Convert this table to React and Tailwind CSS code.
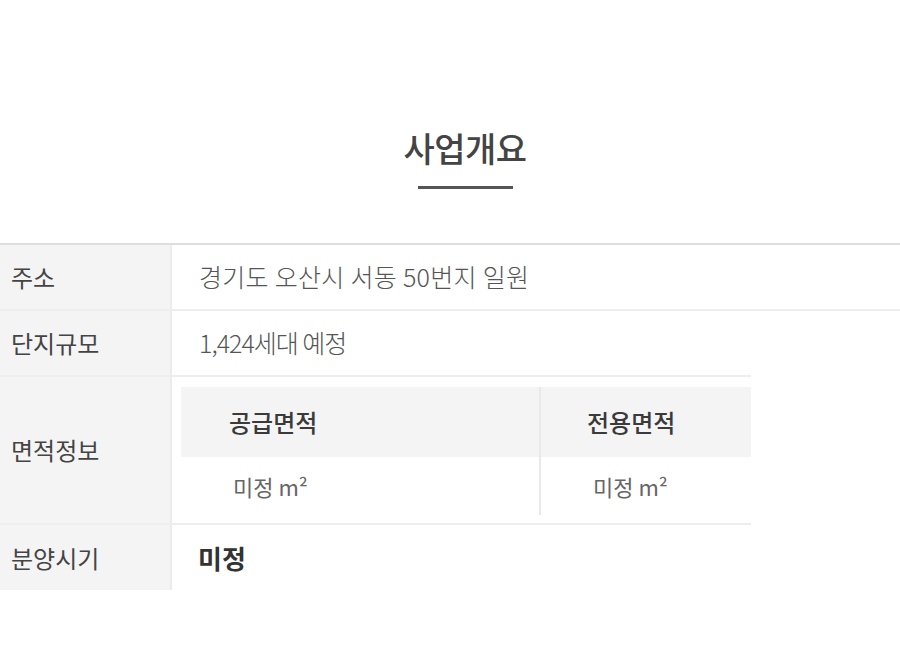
import React from "react";

const rows = [
  { label: "주소", value: "경기도 오산시 서동 50번지 일원" },
  { label: "단지규모", value: "1,424세대 예정" },
];

export default function App() {
  return (
    <div className="min-h-[670px] bg-white text-[#444]" style={{ fontFamily: '"Noto Sans CJK KR", "Noto Sans", sans-serif' }}>
      <div className="pt-[123px] pl-[30px] flex flex-col items-center">
        <h2 className="text-[34px] leading-[50px] font-medium text-[#444] tracking-[-0.5px]">사업개요</h2>
        <div className="mt-[13px] w-[95px] h-[3px] bg-[#555]" />
      </div>

      <div className="mt-[54px] border-t-2 border-[#dedede]">
        {/* 주소 */}
        <div className="flex h-[66px] border-b-2 border-[#eeeeee]">
          <div className="w-[172px] shrink-0 bg-[#f4f4f4] border-r-2 border-[#ececec] flex items-center pl-[11px] text-[24px] text-[#444]">
            {rows[0].label}
          </div>
          <div className="flex items-center pl-[27px] text-[25px] text-[#555] font-light tracking-[0.3px]">{rows[0].value}</div>
        </div>

        {/* 단지규모 */}
        <div className="flex h-[66px] w-[751px] border-b-2 border-[#eeeeee]">
          <div className="w-[172px] shrink-0 bg-[#f4f4f4] border-r-2 border-[#ececec] flex items-center pl-[11px] text-[24px] text-[#444]">
            {rows[1].label}
          </div>
          <div className="flex items-center pl-[27px] text-[25px] text-[#555] font-light tracking-[-1px]">{rows[1].value}</div>
        </div>

        {/* 면적정보 */}
        <div className="flex w-[751px] border-b-2 border-[#eeeeee]">
          <div className="w-[172px] shrink-0 bg-[#f4f4f4] border-r-2 border-[#ececec] flex items-center pl-[11px] text-[24px] text-[#444]">
            면적정보
          </div>
          <div className="flex-1 pl-[9px] pt-[10px] pb-[8px]">
            <div className="grid grid-cols-[360px_1fr]">
              <div className="h-[70px] bg-[#f4f4f4] flex items-center pl-[48px] text-[24px] font-medium text-[#3a3a3a] border-r-2 border-[#e9e9e9]">
                공급면적
              </div>
              <div className="h-[70px] bg-[#f4f4f4] flex items-center pl-[46px] text-[24px] font-medium text-[#3a3a3a]">
                전용면적
              </div>
              <div className="h-[58px] flex items-center pl-[52px] text-[22px] text-[#666] border-r-2 border-[#e9e9e9]">
                미정 m²
              </div>
              <div className="h-[58px] flex items-center pl-[52px] text-[22px] text-[#666]">미정 m²</div>
            </div>
          </div>
        </div>

        {/* 분양시기 */}
        <div className="flex h-[65px] w-[751px]">
          <div className="w-[172px] shrink-0 bg-[#f4f4f4] border-r-2 border-[#ececec] flex items-center pl-[11px] text-[24px] text-[#444]">
            분양시기
          </div>
          <div className="flex items-center pl-[26px] text-[26px] font-bold text-[#333]">미정</div>
        </div>
      </div>
    </div>
  );
}
